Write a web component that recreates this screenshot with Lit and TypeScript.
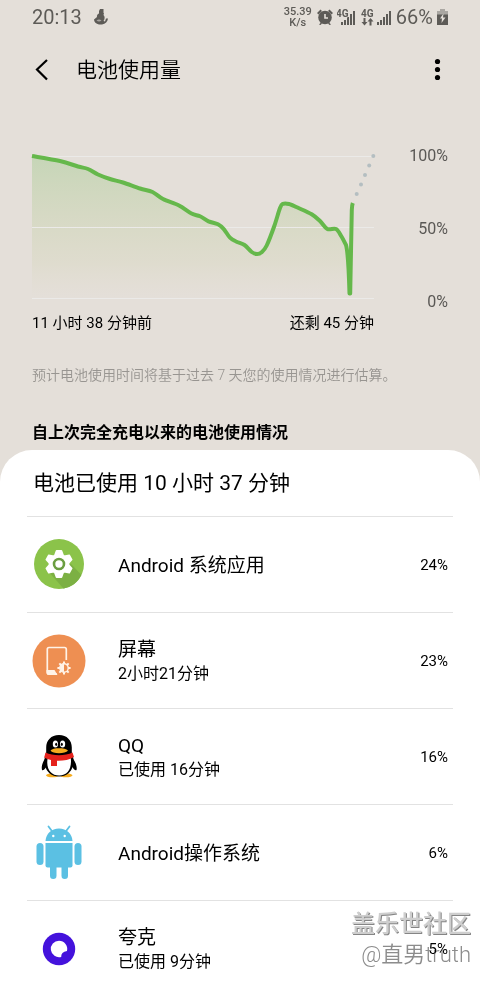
import { LitElement, html, svg, css, nothing } from "lit";
import type { TemplateResult } from "lit";
import { customElement, property } from "lit/decorators.js";

const FONT = css`Roboto, "Noto Sans CJK SC", sans-serif`;

type Point = [number, number];

/** Battery level over time, in chart units (0 = 100%, 142 = 0%). */
const LEVELS: Point[] = [
  [0, 0], [28, 5], [46, 10.5], [56, 13], [66, 18.5], [78, 23], [91, 26.5],
  [108, 32.5], [120.5, 36], [131, 43], [147, 49.5], [159.5, 57.5], [168, 60.3],
  [176.5, 65.3], [186, 68.3], [192, 73.3], [198, 81.7], [204.5, 85.7],
  [212.5, 89], [219.7, 96], [225, 98], [229.7, 96.3], [234.7, 89.5],
  [242.3, 70], [248, 52], [251, 47.8], [257, 48], [266.5, 52], [279.7, 58.3],
  [288, 65], [295.3, 73], [304, 73], [309.5, 80.5], [314, 89],
];
const FORECAST: Point[] = [[324.7, 38], [329, 28.5], [333, 19], [337.2, 9.5], [341.3, 0]];

function smooth(points: Point[]): string {
  let d = `M${points[0][0]} ${points[0][1]}`;
  for (let i = 0; i < points.length - 1; i++) {
    const p0 = points[Math.max(i - 1, 0)];
    const p1 = points[i];
    const p2 = points[i + 1];
    const p3 = points[Math.min(i + 2, points.length - 1)];
    d += `C${p1[0] + (p2[0] - p0[0]) / 6} ${p1[1] + (p2[1] - p0[1]) / 6} ${p2[0] - (p3[0] - p1[0]) / 6} ${p2[1] - (p3[1] - p1[1]) / 6} ${p2[0]} ${p2[1]}`;
  }
  return d;
}

const gear = html`<svg width="50" height="52" viewBox="0 0 50 52" aria-hidden="true">
  <circle cx="25" cy="25" r="25" fill="#8bc34a" />
  <path d="M13.5 31.500 29.500 49.600A25 25 0 0 0 47.500 36L37 25Z" fill="#7cb043" />
  <g fill="#fff">
    <circle cx="25" cy="25" r="10.300" />
    ${[0, 60, 120, 180, 240, 300].map(
      (a) => svg`<path d="M20 16.500 21.800 11.400Q22 11 22.500 11H27.500Q28 11 28.200 11.400L30 16.500Z" transform="rotate(${a} 25 25)" />`,
    )}
  </g>
  <circle cx="25" cy="25" r="5" fill="#fff" stroke="#6b9e41" stroke-width="2.600" />
</svg>`;

const screen = html`<svg width="54" height="54" viewBox="0 0 54 54" aria-hidden="true">
  <circle cx="27" cy="27" r="26.5" fill="#ee8f52" />
  <path d="M34.300 26V15.500Q34.300 13.500 32.500 13.500H17Q15.300 13.500 15.300 15.500V38Q15.300 40 17 40H25" fill="none" stroke="#fff3e8" stroke-width="1.700" />
  <path d="M14.500 36H22.500L25.500 41H17Q14.500 41 14.500 38.500Z" fill="#fff3e8" />
  <g stroke="#fff3e8" stroke-width="2">
    ${[0, 45, 90, 135, 180, 225, 270, 315].map(
      (a) => svg`<path d="M32 30V27.400" transform="rotate(${a} 32 34)" />`,
    )}
  </g>
  <circle cx="32" cy="34" r="4.200" fill="#ee8f52" stroke="#fff3e8" stroke-width="1.400" />
  <path d="M32 30A4 4 0 0 0 32 38Z" fill="#fff3e8" />
</svg>`;

const penguin = html`<svg width="36" height="43" viewBox="0 0 36 43" aria-hidden="true">
  <ellipse cx="11.500" cy="40.300" rx="6.500" ry="2" fill="#f5ab1e" />
  <ellipse cx="25" cy="40.300" rx="6.500" ry="2" fill="#f5ab1e" />
  <path d="M6 21C2 26 0 31 1 35c1 1 3-1 4.500-3.500ZM30 21c4 5 6.500 10 5.500 14-1 1-3-1-4.500-3.500Z" fill="#000" />
  <path d="M18 0C10 0 5.200 5.500 5.200 12.500v5C3.500 22 3 26 4 30.500c1.500 6.500 6.500 11 14 11s12.500-4.500 14-11c1-4.500.5-8.500-1.200-13v-5C30.800 5.500 26 0 18 0Z" fill="#000" />
  <path d="M6.500 24C5 34 10 40.500 18.200 40.500S31 34 29.800 23Z" fill="#fff" />
  <ellipse cx="14.400" cy="9" rx="2.600" ry="3.500" fill="#fff" />
  <ellipse cx="21.600" cy="9" rx="2.600" ry="3.500" fill="#fff" />
  <ellipse cx="15.200" cy="9.300" rx="1" ry="1.600" fill="#000" />
  <ellipse cx="20.800" cy="9.300" rx="1" ry="1.600" fill="#000" />
  <path d="M9.500 15.500C11 13.700 14 13.200 18 13.200s7.500.500 9 2.300c-1.500 1.800-5 2.700-9 2.700s-7.500-.9-8.500-2.700Z" fill="#f5ab1e" />
  <path d="M4.500 17.500C12 21 24 21 31.500 17.500L33 22C28 25 22 26 16 25.800V31H10V25C7.500 24.500 5 23.800 3.200 22.500Z" fill="#e5221c" />
</svg>`;

const robot = html`<svg width="46" height="55" viewBox="0 0 46 55" aria-hidden="true">
  <g fill="#5bc0e3">
    <path d="M9.500 16C10 8.500 15.500 3.500 23 3.500S36 8.500 36.500 16Z" />
    <path d="M9.500 18H36.500V40.500Q36.500 42.500 34.500 42.500H11.500Q9.500 42.500 9.500 40.500Z" />
    <rect x="0.500" y="18" width="7" height="22" rx="3.500" />
    <rect x="38.500" y="18" width="7" height="22" rx="3.500" />
    <rect x="14" y="36" width="6.500" height="18" rx="3.250" />
    <rect x="25.500" y="36" width="6.500" height="18" rx="3.250" />
  </g>
  <path d="M15.500 5.500 12.500 1.500M30.500 5.500 33.500 1.500" stroke="#5bc0e3" stroke-width="1.800" stroke-linecap="round" />
  <circle cx="17.300" cy="11" r="1.200" fill="#fff" />
  <circle cx="28.700" cy="11" r="1.200" fill="#fff" />
</svg>`;

const quark = html`<svg width="34" height="34" viewBox="0 0 34 34" aria-hidden="true">
  <circle cx="17" cy="17" r="16.200" fill="#4412dc" />
  <path d="M17 8.800A8.200 8.200 0 1 0 19.200 24.900Q18.900 20.300 25 19A8.200 8.200 0 0 0 17 8.800Z" fill="#fff" />
</svg>`;

interface Usage {
  name: string;
  detail?: string;
  percent: number;
  icon: TemplateResult;
}

const USAGE: Usage[] = [
  { name: "Android 系统应用", percent: 24, icon: gear },
  { name: "屏幕", detail: "2小时21分钟", percent: 23, icon: screen },
  { name: "QQ", detail: "已使用 16分钟", percent: 16, icon: penguin },
  { name: "Android操作系统", percent: 6, icon: robot },
  { name: "夸克", detail: "已使用 9分钟", percent: 5, icon: quark },
];

const bars = (x: number) =>
  [3, 5, 8, 11, 14].map(
    (h, i) => svg`<rect x=${x + i * 3} y=${16 - h} width="2" height=${h} />`,
  );

@customElement("status-bar")
class StatusBar extends LitElement {
  static styles = css`
    :host {
      display: flex;
      align-items: center;
      height: 34px;
      padding: 0 32px;
      color: #5d5b57;
      font: 20px/24px ${FONT};
    }
    svg {
      display: block;
      fill: currentColor;
    }
    .notice {
      margin-left: 12px;
    }
    .right {
      display: flex;
      align-items: center;
      gap: 4px;
      margin-left: auto;
    }
    .speed {
      font: 500 11px/11px ${FONT};
      text-align: center;
      margin-right: 1px;
    }
    .speed span {
      display: block;
    }
    .tag {
      font: 700 10px ${FONT};
    }
  `;

  render() {
    return html`
      <span>20:13</span>
      <svg class="notice" width="14" height="16" viewBox="0 0 14 16" aria-hidden="true">
        <path d="M6 0H9.500V4H10L9.500 6C11 7.500 11 10 9.500 12L11 12.500 12 9.500H14C13.500 12.500 11.500 15 8 15.500H5C2 15 0 13 0 10.500L3 8C2.500 6.500 3.500 5 5 4.500V2Z" />
        <path d="M2.500 11.500Q5 9.500 7.500 11.500 5 13.500 2.500 11.500Z" fill="#a9a6a1" />
      </svg>
      <div class="right">
        <div class="speed"><span>35.39</span><span>K/s</span></div>
        <svg width="16" height="16" viewBox="0 0 16 16" aria-hidden="true">
          <path d="M0 4 3.500 0.500 5 2 1.500 5.500ZM16 4 12.500 0.500 11 2 14.500 5.500ZM2 15.500 4 13.500 5 14.500 3.500 16ZM14 15.500 12 13.500 11 14.500 12.500 16Z" />
          <circle cx="8" cy="8.500" r="6.800" />
          <path d="M8 5V9H11" fill="none" stroke="#e4dfd9" stroke-width="1.600" />
        </svg>
        <svg width="20" height="17" viewBox="0 0 20 17" aria-hidden="true">
          ${bars(4)}
          <text class="tag" x="-1" y="8" stroke="#e4dfd9" stroke-width="1.500" paint-order="stroke">4G</text>
        </svg>
        <svg width="31" height="17" viewBox="0 0 31 17" aria-hidden="true">
          <text class="tag" x="0" y="8">4G</text>
          <path d="M2.500 9H4.500V13H6.500L3.500 16.500 0.500 13H2.500ZM8.500 16.500H10.500V12.500H12.500L9.500 9 6.500 12.500H8.500Z" />
          ${bars(16)}
        </svg>
        <span>66%</span>
        <svg width="11" height="17" viewBox="0 0 11 17" aria-hidden="true">
          <path d="M3 0H8V2H11V6H0V2H3Z" fill="#aaa7a2" />
          <path d="M0 5.500H11V16H0Z" />
          <path d="M6.500 4.500 3 9.500H5L4.500 14 8.500 8.500H6Z" fill="#e4dfd9" />
        </svg>
      </div>
    `;
  }
}

@customElement("battery-chart")
class BatteryChart extends LitElement {
  static styles = css`
    :host {
      display: grid;
      grid-template-columns: 1fr 40px;
      column-gap: 34px;
      padding: 0 32px;
      font: 400 15px/20px ${FONT};
      color: #000;
    }
    .plot {
      padding-top: 10px;
    }
    svg {
      display: block;
      width: 100%;
      overflow: visible;
    }
    .line {
      fill: none;
      stroke: #65b84b;
      stroke-width: 4;
      stroke-linejoin: round;
    }
    .grid {
      stroke: #ebeae8;
    }
    .dot {
      fill: #b4bec1;
    }
    .times {
      display: flex;
      justify-content: space-between;
      margin-top: 15px;
    }
    .scale {
      display: flex;
      flex-direction: column;
      justify-content: space-between;
      align-items: flex-end;
      margin-bottom: 21px;
      color: #5a5855;
      font-size: 16px;
    }
  `;

  render() {
    const line = smooth(LEVELS);
    return html`
      <div class="plot">
        <svg viewBox="0 0 342 142" role="img" aria-label="电池电量">
          <defs>
            <linearGradient id="fade" x1="0" y1="0" x2="0" y2="1">
              <stop offset="0" stop-color="#65b84b" stop-opacity="0.24" />
              <stop offset="0.75" stop-color="#a0b850" stop-opacity="0.08" />
              <stop offset="1" stop-color="#c8c070" stop-opacity="0" />
            </linearGradient>
          </defs>
          <path d="${line}L318 138V142H0Z" fill="url(#fade)" />
          <path class="grid" d="M0 .5H342M0 71.500H342M0 142.500H342" />
          <path class="line" d="${line}C316 96 317 120 317.500 137.500L318.200 137.500C318.800 110 319.300 70 319.800 54Q320 49 320.800 47" />
          ${FORECAST.map(([x, y]) => svg`<circle class="dot" cx=${x} cy=${y} r="2" />`)}
        </svg>
        <div class="times"><span>11 小时 38 分钟前</span><span>还剩 45 分钟</span></div>
      </div>
      <div class="scale"><span>100%</span><span>50%</span><span>0%</span></div>
    `;
  }
}

@customElement("usage-row")
class UsageRow extends LitElement {
  @property({ attribute: false }) item!: Usage;

  static styles = css`
    :host {
      display: flex;
      align-items: center;
      height: 95px;
      border-top: 1px solid #e2e2e2;
      padding-right: 5px;
      font: 400 16px/24px ${FONT};
    }
    .icon {
      display: grid;
      place-items: center;
      width: 64px;
      margin-right: 27px;
    }
    .text {
      flex: 1;
      padding-top: 2px;
    }
    .name {
      font-size: 19px;
    }
    .percent {
      font-size: 15px;
    }
  `;

  render() {
    const { name, detail, percent, icon } = this.item;
    return html`
      <div class="icon">${icon}</div>
      <div class="text">
        <div class="name">${name}</div>
        ${detail ? html`<div>${detail}</div>` : nothing}
      </div>
      <div class="percent">${percent}%</div>
    `;
  }
}

@customElement("app-root")
class AppRoot extends LitElement {
  static styles = css`
    :host {
      display: block;
      position: relative;
      height: 100vh;
      overflow: hidden;
      background: #e4dfd9;
      color: #000;
      font: 350 16px/24px ${FONT};
    }
    .page {
      display: flex;
      flex-direction: column;
      height: 100%;
      overflow-y: auto;
      scrollbar-width: none;
    }
    .page > * {
      flex-shrink: 0;
    }
    header {
      display: flex;
      align-items: center;
      height: 72px;
      padding: 0 32px;
      margin-bottom: 40px;
    }
    h1 {
      flex: 1;
      margin: 0 0 0 24px;
      font-size: 21px;
      font-weight: 350;
    }
    button {
      display: grid;
      place-items: center;
      width: 20px;
      height: 40px;
      padding: 0;
      border: 0;
      background: none;
      color: inherit;
    }
    .note {
      margin: 32px 32px 0;
      color: #989591;
      font-size: 14px;
      line-height: 20px;
    }
    h2 {
      margin: 36px 32px 5px;
      font-size: 16px;
      line-height: 24px;
      font-weight: 700;
    }
    .card {
      flex-grow: 1;
      padding: 0 27px;
      border-radius: 32px 32px 0 0;
      background: #fff;
    }
    h3 {
      margin: 0;
      padding: 18px 6px;
      font-size: 21px;
      line-height: 30px;
      font-weight: 400;
    }
    ul {
      margin: 0;
      padding: 0;
      list-style: none;
    }
    .watermark {
      position: absolute;
      right: 9px;
      bottom: 16px;
      color: #8c8c8c;
      font: 350 22px/30px ${FONT};
      text-align: right;
      pointer-events: none;
      mix-blend-mode: darken;
    }
    .watermark strong {
      display: block;
      color: #cecece;
      font-size: 24px;
      line-height: 32px;
      font-weight: 500;
      text-shadow: 1px 1px 0 #858585;
    }
  `;

  render() {
    return html`
      <div class="page">
        <status-bar></status-bar>
        <header>
          <button aria-label="返回">
            <svg width="20" height="24" viewBox="0 0 20 24" aria-hidden="true">
              <path d="M15 2 5 11.500 15 21.500" fill="none" stroke="#000" stroke-width="2.200" />
            </svg>
          </button>
          <h1>电池使用量</h1>
          <button aria-label="更多选项">
            <svg width="20" height="24" viewBox="0 0 20 24" aria-hidden="true">
              <circle cx="9.500" cy="3.500" r="2.600" />
              <circle cx="9.500" cy="11.500" r="2.600" />
              <circle cx="9.500" cy="19.500" r="2.600" />
            </svg>
          </button>
        </header>
        <battery-chart></battery-chart>
        <p class="note">预计电池使用时间将基于过去 7 天您的使用情况进行估算。</p>
        <h2>自上次完全充电以来的电池使用情况</h2>
        <section class="card">
          <h3>电池已使用 10 小时 37 分钟</h3>
          <ul>
            ${USAGE.map((item) => html`<li><usage-row .item=${item}></usage-row></li>`)}
          </ul>
        </section>
      </div>
      <div class="watermark"><strong>盖乐世社区</strong>@直男truth</div>
    `;
  }
}
